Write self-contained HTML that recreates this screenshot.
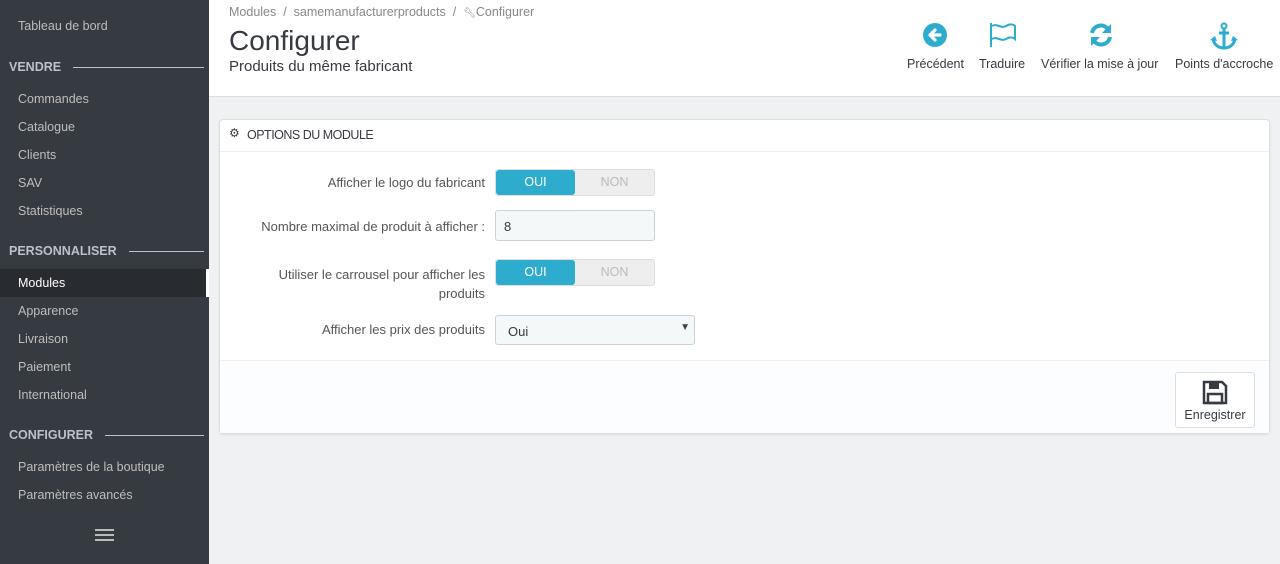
<!DOCTYPE html>
<html><head><meta charset="utf-8"><style>
*{box-sizing:border-box;margin:0;padding:0}
body{width:1280px;height:564px;overflow:hidden;background:#eff1f2;font-family:"Liberation Sans",sans-serif;font-size:13px;color:#363a41;position:relative}
.side{position:absolute;left:0;top:0;width:209px;height:564px;background:#363a41}
.side .it{position:absolute;left:18px;color:#bebebe;font-size:12.5px}
.side .sec{position:absolute;left:9px;color:#bcc2c7;font-weight:bold;font-size:12.5px;width:195px;display:flex;align-items:center}
.side .sec:after{content:"";flex:1;height:1px;background:#bcc2c7;margin-left:12px}
.active{position:absolute;left:0;top:269px;width:209px;height:28px;background:#282b30;border-right:3px solid #fff}
.hdr{position:absolute;left:209px;top:0;right:0;height:97px;background:#fff;border-bottom:1px solid #dcdcdc}
.bc{position:absolute;left:20px;top:5px;color:#888;font-size:12.5px}
.h1{position:absolute;left:20px;top:25px;font-size:28px;color:#363a41}
.sub{position:absolute;left:20px;top:58px;font-size:15px;color:#363a41}
.tb{position:absolute;top:57px;font-size:12.5px;color:#363a41;text-align:center}
.ic{position:absolute;top:22px}
.panel{position:absolute;left:219px;top:119px;width:1051px;height:315px;background:#fff;border:1px solid #dcdfe2;border-radius:4px;box-shadow:0 1px 2px rgba(0,0,0,.08)}
.ph{height:32px;border-bottom:1px solid #eee;padding:8px 0 0 27px;font-size:12.5px;color:#363a41;letter-spacing:-.5px;position:relative}
.lbl{position:absolute;right:784px;text-align:right;font-size:13px;color:#555}
.sw{position:absolute;left:275px;width:160px;height:27px;border:1px solid #ddd;border-radius:3px;background:#eee;display:flex}
.sw div{width:80px;text-align:center;line-height:25px;font-size:12.5px;color:#bbb}
.sw .on{background:#2eacce;color:#fff;border-radius:3px}
.inp{position:absolute;left:275px;top:90px;width:160px;height:31px;border:1px solid #c9d4da;border-radius:3px;background:#f5f8f9;padding:8px 0 0 8px;font-size:13px}
.sel{position:absolute;left:275px;top:195px;width:200px;height:30px;border:1px solid #c9d4da;border-radius:3px;background:#f5f8f9;padding:8px 0 0 12px;font-size:13px}
.foot{position:absolute;left:0;top:240px;width:1049px;height:73px;border-top:1px solid #eee;background:#fcfdfe}
.btn{position:absolute;left:955px;top:11px;width:80px;height:56px;border:1px solid #ddd;border-radius:3px;background:#fff;text-align:center;font-size:12.5px;color:#363a41}
</style></head><body>
<div class="side">
<div class="active"></div>
<div class="it" style="top:19px">Tableau de bord</div>
<div class="sec" style="top:60px">VENDRE</div>
<div class="it" style="top:92px">Commandes</div>
<div class="it" style="top:120px">Catalogue</div>
<div class="it" style="top:148px">Clients</div>
<div class="it" style="top:176px">SAV</div>
<div class="it" style="top:204px">Statistiques</div>
<div class="sec" style="top:244px">PERSONNALISER</div>
<div class="it" style="top:276px;color:#fff">Modules</div>
<div class="it" style="top:304px">Apparence</div>
<div class="it" style="top:332px">Livraison</div>
<div class="it" style="top:360px">Paiement</div>
<div class="it" style="top:388px">International</div>
<div class="sec" style="top:428px">CONFIGURER</div>
<div class="it" style="top:460px">Paramètres de la boutique</div>
<div class="it" style="top:488px">Paramètres avancés</div>
<div style="position:absolute;left:95px;top:529px;width:19px;height:2px;background:#bbb;box-shadow:0 5px 0 #bbb,0 10px 0 #bbb"></div>
</div>
<div class="hdr">
<div class="bc">Modules &nbsp;/&nbsp; samemanufacturerproducts &nbsp;/&nbsp; <span style="font-size:10px">🔧︎</span>Configurer</div>
<div class="h1">Configurer</div>
<div class="sub">Produits du même fabricant</div>
<svg class="ic" style="left:713px" width="26" height="26" viewBox="0 0 26 26"><circle cx="13" cy="13" r="12" fill="#2eacce"/><path d="M18 13H9M13 8l-5 5 5 5" stroke="#fff" stroke-width="3.2" fill="none" stroke-linecap="round" stroke-linejoin="round"/></svg>
<div class="tb" style="left:698px">Précédent</div>
<svg class="ic" style="left:780px" width="28" height="26" viewBox="0 0 28 26"><path d="M2 1v24" stroke="#2eacce" stroke-width="2"/><path d="M3 4c5-3 9 3 14 0s8-1 9 0v13c-1-1-4-3-9 0s-9-3-14 0" stroke="#2eacce" stroke-width="2" fill="none"/></svg>
<div class="tb" style="left:770px">Traduire</div>
<svg class="ic" style="left:879px" width="26" height="26" viewBox="0 0 26 26"><path d="M4 11a9 9 0 0 1 16-4" stroke="#2eacce" stroke-width="4" fill="none"/><path d="M23 2v9h-9z" fill="#2eacce"/><path d="M22 15a9 9 0 0 1-16 4" stroke="#2eacce" stroke-width="4" fill="none"/><path d="M3 24v-9h9z" fill="#2eacce"/></svg>
<div class="tb" style="left:832px">Vérifier la mise à jour</div>
<svg class="ic" style="left:1001px" width="28" height="28" viewBox="0 0 28 28"><circle cx="14" cy="4" r="2.5" stroke="#2eacce" stroke-width="2" fill="none"/><path d="M14 7v19M9 11h10M3 17c1 6 6 9 11 9s10-3 11-9" stroke="#2eacce" stroke-width="3" fill="none"/><path d="M0 18l5-4 2 5zM28 18l-5-4-2 5z" fill="#2eacce"/></svg>
<div class="tb" style="left:966px">Points d'accroche</div>
</div>
<div class="panel">
<div class="ph"><span style="position:absolute;left:9px;top:6px;color:#363a41;font-size:12px">⚙</span>OPTIONS DU MODULE</div>
<div class="lbl" style="top:55px">Afficher le logo du fabricant</div>
<div class="sw" style="top:49px"><div class="on">OUI</div><div>NON</div></div>
<div class="lbl" style="top:99px">Nombre maximal de produit à afficher :</div>
<div class="inp">8</div>
<div class="lbl" style="top:145px;line-height:19px">Utiliser le carrousel pour afficher les<br>produits</div>
<div class="sw" style="top:139px"><div class="on">OUI</div><div>NON</div></div>
<div class="lbl" style="top:202px">Afficher les prix des produits</div>
<div class="sel">Oui<span style="position:absolute;right:4px;top:6px;font-size:10px;color:#444">▼</span></div>
<div class="foot"><div class="btn">
<svg style="margin-top:7px" width="26" height="25" viewBox="0 0 26 25"><path d="M2 2h18l4 4v17H2z" stroke="#363a41" stroke-width="2.5" fill="none"/><rect x="7" y="3" width="10" height="6" fill="#363a41"/><rect x="6" y="14" width="14" height="9" stroke="#363a41" stroke-width="2.5" fill="none"/></svg>
<div>Enregistrer</div></div></div>
</div>
</body></html>
